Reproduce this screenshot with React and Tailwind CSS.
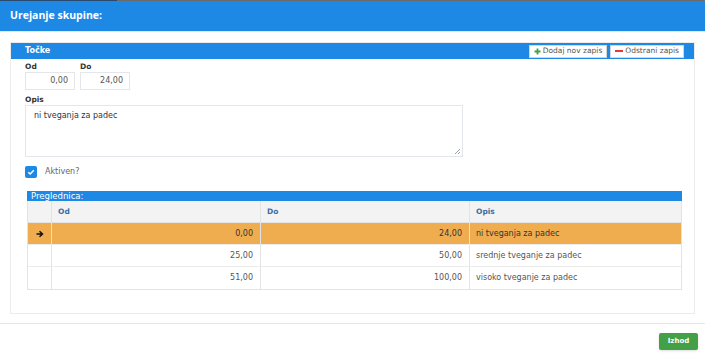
import React from 'react';

const rows = [
  { od: '0,00', do: '24,00', opis: 'ni tveganja za padec', active: true },
  { od: '25,00', do: '50,00', opis: 'srednje tveganje za padec' },
  { od: '51,00', do: '100,00', opis: 'visoko tveganje za padec' },
];

const App = () => {
  return (
    <div className="w-[705px] h-[357px] bg-white overflow-hidden flex flex-col text-[#333]" style={{ fontFamily: '"DejaVu Sans", Verdana, sans-serif' }}>
      {/* top strip */}
      <div className="h-px flex">
        <div className="w-[117px] bg-[#2b4a6b]"></div>
        <div className="flex-1 bg-[#6b6b6b]"></div>
      </div>

      {/* header */}
      <div className="h-[31px] bg-[#1e88e5] flex items-center px-[10px] border-b border-[#dfe6ee]">
        <h1 className="text-white font-bold text-[10.5px]" style={{ fontFamily: '"Open Sans", sans-serif' }}>Urejanje skupine:</h1>
      </div>

      <div className="px-[10px] pt-[10px]">
        <div className="h-[272px] border border-[#ececec] flex flex-col">
          {/* panel header */}
          <div className="h-[16px] bg-[#1e88e5] flex items-center justify-between pl-[14px] pr-[10px]">
            <span className="text-white font-bold text-[8px]">Točke</span>
            <div className="flex gap-[3px]">
              <button className="h-[13px] px-[4px] bg-white border border-[#d6d6d6] flex items-center gap-[2px] text-[7.5px] text-[#555]">
                <svg width="7" height="7" viewBox="0 0 7 7">
                  <path d="M3.5 0.5 V6.5 M0.5 3.5 H6.5" stroke="#43a047" strokeWidth="1.8" />
                </svg>
                Dodaj nov zapis
              </button>
              <button className="h-[13px] px-[4px] bg-white border border-[#d6d6d6] flex items-center gap-[2px] text-[7.5px] text-[#555]">
                <span className="w-[8px] h-[2px] bg-[#e53935]"></span>
                Odstrani zapis
              </button>
            </div>
          </div>

          <div className="pl-[14px] pr-[15px] pt-[3px] flex flex-col">
            <div className="flex gap-[5px]">
              <div className="flex flex-col">
                <label className="text-[7.5px] font-bold text-[#333] h-[10px] leading-[10px]">Od</label>
                <div className="w-[50px] h-[18px] border border-[#e3e6ea] flex items-center justify-end pr-[6px] text-[8px] text-[#555]">0,00</div>
              </div>
              <div className="flex flex-col">
                <label className="text-[7.5px] font-bold text-[#333] h-[10px] leading-[10px]">Do</label>
                <div className="w-[50px] h-[18px] border border-[#e3e6ea] flex items-center justify-end pr-[6px] text-[8px] text-[#555]">24,00</div>
              </div>
            </div>

            <label className="text-[7.5px] font-bold mt-[5px] h-[10px] leading-[10px]">Opis</label>
            <div className="relative w-[438px] h-[52px] border border-[#e3e6ea] text-[8px] pl-[8px] pt-[4px]">
              ni tveganja za padec
              <svg className="absolute right-[1px] bottom-[1px]" width="7" height="7" viewBox="0 0 7 7">
                <path d="M1 6 L6 1 M4 6 L6 4" stroke="#888" strokeWidth="0.8" />
              </svg>
            </div>

            <div className="flex items-center gap-[8px] mt-[9px]">
              <div className="w-[12px] h-[12px] rounded-[2px] bg-[#1e88e5] flex items-center justify-center">
                <svg width="8" height="8" viewBox="0 0 8 8">
                  <path d="M1.3 4.2 L3.2 6 L6.8 2.2" stroke="white" strokeWidth="1.5" fill="none" />
                </svg>
              </div>
              <span className="text-[8px] text-[#666]">Aktiven?</span>
            </div>

            <div className="ml-[2px] mt-[13px] w-[655px]">
              <div className="h-[10px] bg-[#1e88e5] text-white text-[8.5px] leading-[10px] pl-[4px]">Preglednica:</div>
              <div className="border-l border-r border-b border-[#e3e3e3]">
                <div className="grid grid-cols-[24px_209px_209px_1fr] h-[22px] bg-[#f3f3f3] border-b border-[#e3e3e3] text-[7.5px] font-bold text-[#3b6ea5]">
                  <div className="border-r border-[#e3e3e3]"></div>
                  <div className="border-r border-[#e3e3e3] flex items-center pl-[6px]">Od</div>
                  <div className="border-r border-[#e3e3e3] flex items-center pl-[6px]">Do</div>
                  <div className="flex items-center pl-[6px]">Opis</div>
                </div>
                {rows.map((r, i) => (
                  <div
                    key={i}
                    className={`grid grid-cols-[24px_209px_209px_1fr] h-[22px] text-[8px] ${r.active ? 'bg-[#efad4f] text-[#333]' : 'bg-white text-[#555]'} ${i < rows.length - 1 ? 'border-b border-[#ececec]' : ''}`}
                  >
                    <div className="border-r border-[#e3e3e3] flex items-center justify-center">
                      {r.active && (
                        <svg width="8" height="8" viewBox="0 0 8 8">
                          <path d="M0.5 4 H6 M3.5 1.3 L6.5 4 L3.5 6.7" stroke="#111" strokeWidth="1.5" fill="none" />
                        </svg>
                      )}
                    </div>
                    <div className="border-r border-[#e3e3e3] flex items-center justify-end pr-[7px]">{r.od}</div>
                    <div className="border-r border-[#e3e3e3] flex items-center justify-end pr-[7px]">{r.do}</div>
                    <div className="flex items-center pl-[6px]">{r.opis}</div>
                  </div>
                ))}
              </div>
            </div>
          </div>
        </div>
      </div>

      <div className="mt-[9px] border-t border-[#e6e6e6] flex justify-end pr-[7px] pt-[9px]">
        <button className="w-[39px] h-[17px] bg-[#43a047] rounded-[2px] text-white text-[7px] font-bold shadow-sm">Izhod</button>
      </div>
    </div>
  );
};

export default App;
